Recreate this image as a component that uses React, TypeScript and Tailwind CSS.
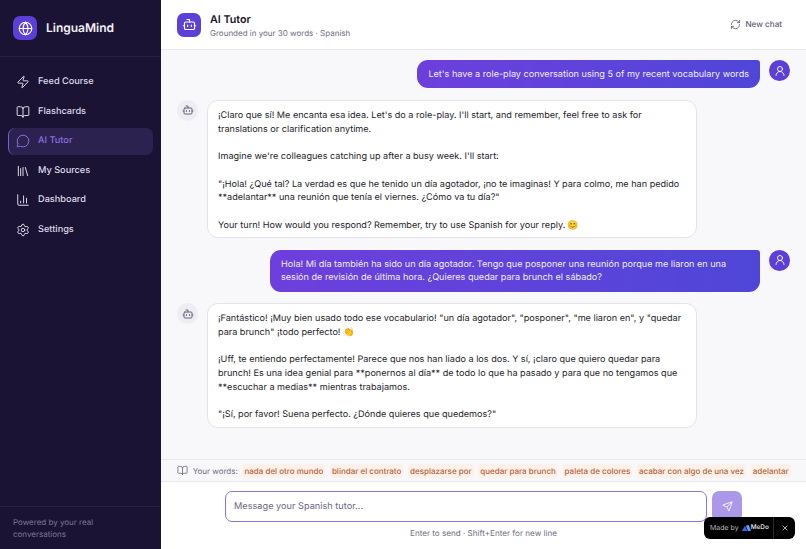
import { Bot, BookOpen, ChartColumn, Globe, Library, MessageCircle, RefreshCw, Send, Settings, UserRound, X, Zap } from 'lucide-react'

const navItems = [
  { label: 'Feed Course', icon: Zap },
  { label: 'Flashcards', icon: BookOpen },
  { label: 'AI Tutor', icon: MessageCircle, active: true },
  { label: 'My Sources', icon: Library },
  { label: 'Dashboard', icon: ChartColumn },
  { label: 'Settings', icon: Settings },
]

const words = [
  'nada del otro mundo',
  'blindar el contrato',
  'desplazarse por',
  'quedar para brunch',
  'paleta de colores',
  'acabar con algo de una vez',
  'adelantar',
]

function Sidebar() {
  return (
    <aside className="flex h-full w-[161px] shrink-0 flex-col bg-[#1a1333]">
      <div className="flex h-[57px] items-center gap-[9px] border-b border-[#271f42] px-[13px]">
        <div className="flex h-[24px] w-[24px] items-center justify-center rounded-[7px] bg-[#5b3fd6]">
          <Globe className="h-[15px] w-[15px] text-white" strokeWidth={1.8} />
        </div>
        <span className="text-[12px] font-semibold text-[#f2f0f8]">LinguaMind</span>
      </div>
      <nav className="flex flex-1 flex-col gap-[3px] px-[8px] pt-[12px]">
        {navItems.map(item => {
          const Icon = item.icon
          return (
            <div
              key={item.label}
              className={
                item.active
                  ? 'flex h-[26.5px] items-center gap-[8px] rounded-[7px] border-l border-[#7c5fd6] bg-[#2b2250] pl-[7px] text-[#8b6fe0]'
                  : 'flex h-[26.5px] items-center gap-[8px] pl-[8px] text-[#dedbea]'
              }
            >
              <Icon className="h-[14px] w-[14px]" strokeWidth={1.7} />
              <span className="text-[9.2px] font-medium">{item.label}</span>
            </div>
          )
        })}
      </nav>
      <div className="border-t border-[#271f42] px-[13px] pb-[9px] pt-[9px] text-[8px] leading-[12px] text-[#7d7893]">
        Powered by your real
        <br />
        conversations
      </div>
    </aside>
  )
}

function UserMessage({ children }: { children: React.ReactNode }) {
  return (
    <div className="flex justify-end gap-[9px]">
      <div className="max-w-[490px] rounded-[11px] rounded-tr-[3px] bg-gradient-to-r from-[#6d3fdc] to-[#4f46d8] px-[11px] pb-[6.6px] pt-[8px] text-[9.1px] leading-[13.7px] text-[#f1effc]">
        {children}
      </div>
      <div className="flex h-[21px] w-[21px] shrink-0 items-center justify-center rounded-full bg-[#5b3fd6]">
        <UserRound className="h-[12px] w-[12px] text-white" strokeWidth={1.8} />
      </div>
    </div>
  )
}

function TutorMessage({ children }: { children: React.ReactNode }) {
  return (
    <div className="flex gap-[9px]">
      <div className="flex h-[21px] w-[21px] shrink-0 items-center justify-center rounded-full bg-[#eeedf3]">
        <Bot className="h-[12px] w-[12px] text-[#5c5870]" strokeWidth={1.8} />
      </div>
      <div className="w-[490px] whitespace-pre-line rounded-[11px] border border-[#e4e3ea] bg-white pb-[4.7px] pl-[10px] pr-[9px] pt-[8px] text-[9.1px] leading-[13.7px] text-[#1d1b29]">
        {children}
      </div>
    </div>
  )
}

function MadeByBadge() {
  return (
    <div className="absolute bottom-[10px] right-[11px] flex h-[22px] w-[91px] items-center whitespace-nowrap rounded-[6px] bg-black pl-[6px] text-[7px] text-[#b9b9b9]">
      <span>Made by</span>
      <svg viewBox="0 0 12 8" className="ml-[3px] h-[6px] w-[9px] shrink-0">
        <path d="M0 8 L4 1 L7 8 Z" fill="#2f6bf0" />
        <path d="M5 1 L9 0 L12 8 L8 8 Z" fill="#5aa0f5" />
      </svg>
      <span className="text-[6.4px] font-semibold text-[#dcdcdc]">MeDo</span>
      <div className="ml-auto flex h-full w-[22px] items-center justify-center border-l border-[#2a2a2a]">
        <X className="h-[8px] w-[8px] text-white" strokeWidth={2} />
      </div>
    </div>
  )
}

export default function App() {
  return (
    <div className="relative flex h-[549px] w-[806px] overflow-hidden bg-white font-['Inter',sans-serif] [text-rendering:geometricPrecision]">
      <Sidebar />
      <main className="flex min-w-0 flex-1 flex-col">
        {/* Header */}
        <header className="flex h-[50px] shrink-0 items-center justify-between border-b border-[#e8e8ee] bg-white pl-[16px] pr-[24px]">
          <div className="flex items-center gap-[9px]">
            <div className="flex h-[24px] w-[24px] items-center justify-center rounded-[7px] bg-[#5b3fd6]">
              <Bot className="h-[15px] w-[15px] text-white" strokeWidth={1.9} />
            </div>
            <div className="pt-[3px]">
              <p className="text-[10.7px] font-semibold leading-[14px] text-[#15131f]">AI Tutor</p>
              <p className="text-[8px] leading-[12px] text-[#6f6c80]">Grounded in your 30 words · Spanish</p>
            </div>
          </div>
          <div className="flex items-center gap-[4px] text-[#5f5c6f]">
            <RefreshCw className="h-[11px] w-[11px]" strokeWidth={1.8} />
            <span className="text-[8.1px] font-medium">New chat</span>
          </div>
        </header>

        {/* Messages */}
        <div className="flex flex-1 flex-col gap-[11.7px] overflow-hidden bg-[#f8f8fb] px-[16px] py-[10px]">
          <UserMessage>Let's have a role-play conversation using 5 of my recent vocabulary words</UserMessage>
          <TutorMessage>
            {`¡Claro que sí! Me encanta esa idea. Let's do a role-play. I'll start, and remember, feel free to ask for translations or clarification anytime.

Imagine we're colleagues catching up after a busy week. I'll start:

"¡Hola! ¿Qué tal? La verdad es que he tenido un día agotador, ¡no te imaginas! Y para colmo, me han pedido **adelantar** una reunión que tenía el viernes. ¿Cómo va tu día?"

Your turn! How would you respond? Remember, try to use Spanish for your reply. 😊`}
          </TutorMessage>
          <UserMessage>
            Hola! Mi día también ha sido un día agotador. Tengo que posponer una reunión porque me liaron en una sesión de revisión de última hora. ¿Quieres quedar para brunch el sábado?
          </UserMessage>
          <TutorMessage>
            {`¡Fantástico! ¡Muy bien usado todo ese vocabulario! "un día agotador", "posponer", "me liaron en", y "quedar para brunch" ¡todo perfecto! 👏

¡Uff, te entiendo perfectamente! Parece que nos han liado a los dos. Y sí, ¡claro que quiero quedar para brunch! Es una idea genial para **ponernos al día** de todo lo que ha pasado y para que no tengamos que **escuchar a medias** mientras trabajamos.

"¡Sí, por favor! Suena perfecto. ¿Dónde quieres que quedemos?"`}
          </TutorMessage>
        </div>

        {/* Vocabulary strip */}
        <div className="flex h-[23px] shrink-0 items-center gap-[4.7px] overflow-hidden whitespace-nowrap border-y border-[#e8e8ee] bg-[#f8f8fb] pl-[16px] text-[8px]">
          <BookOpen className="h-[11px] w-[11px] shrink-0 text-[#6f6c80]" strokeWidth={1.8} />
          <span className="text-[#6f6c80]">Your words:</span>
          {words.map(word => (
            <span key={word} className="rounded-[3px] bg-[#fdf1ea] px-[2px] py-[1px] font-medium text-[#b5623a]">
              {word}
            </span>
          ))}
        </div>

        {/* Composer */}
        <div className="flex h-[67px] shrink-0 flex-col items-center bg-white pt-[9px]">
          <div className="flex items-stretch gap-[5px]">
            <div className="flex h-[31px] w-[482px] items-center rounded-[7px] border border-[#8f72d8] bg-white px-[8px] text-[9.2px] text-[#6b6880]">
              Message your Spanish tutor...
            </div>
            <div className="flex w-[30px] items-center justify-center rounded-[7px] bg-[#ab98e8]">
              <Send className="h-[11px] w-[11px] text-white" strokeWidth={1.8} />
            </div>
          </div>
          <p className="mt-[6px] text-[8.1px] leading-[11px] text-[#6f6c80]">Enter to send · Shift+Enter for new line</p>
        </div>
      </main>
      <MadeByBadge />
    </div>
  )
}
